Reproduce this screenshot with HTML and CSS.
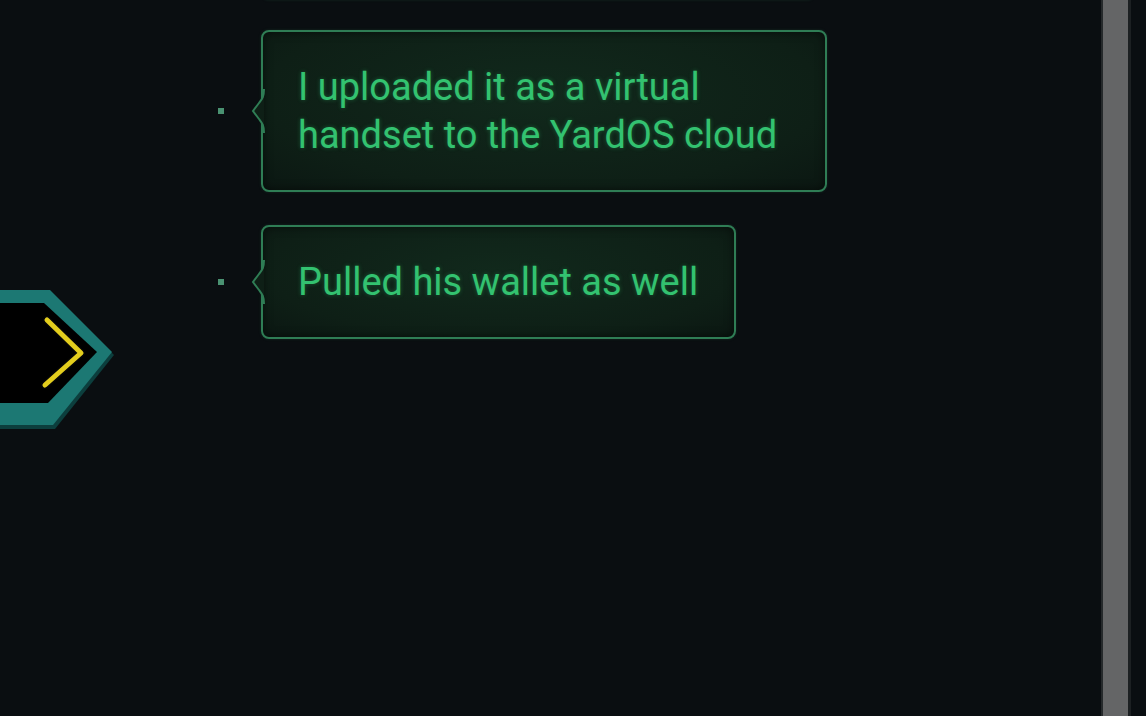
FILE: index.html
```html
<!DOCTYPE html>
<html lang="en">
<head>
<meta charset="UTF-8">
<meta name="viewport" content="width=device-width, initial-scale=1.0">
<title>Chat</title>
<link rel="stylesheet" href="styles.css">
</head>
<body>
    <div class="screen">
        <div class="side">
            <!-- back/next button on the left edge -->
            <button class="nav_btn" type="button" aria-label="Next">
                <svg width="116" height="142" viewBox="0 0 116 142">
                    <polygon points="0,5 52,5 114,67 55,141 0,141" fill="#0c3e3d"/>
                    <polygon points="0,2 50,2 112,64 53,137 0,137" fill="#1c7873"/>
                    <polygon points="0,15 44,15 97,64 48,115 0,115" fill="#000"/>
                    <polyline points="47,32 81,65 45,97" fill="none" stroke="#050505" stroke-width="8" stroke-linecap="round" stroke-linejoin="round"/>
                    <polyline points="47,32 81,65 45,97" fill="none" stroke="#e3cd1d" stroke-width="5" stroke-linecap="round" stroke-linejoin="round"/>
                </svg>
            </button>
        </div>
        <div class="chat">
            <div class="msg prev">
                <span class="dot"></span>
                <div class="bubble"></div>
            </div>
            <div class="msg">
                <span class="dot"></span>
                <div class="bubble">
                    <svg class="tail" width="14" height="44" viewBox="0 0 14 44"><path d="M13 0 C13 8 11 10 8 14 L2 22 L8 30 C11 34 13 36 13 44" fill="#0e1f16" stroke="#2f7d55" stroke-width="2"/></svg>
                    <p>I uploaded it as a virtual handset to the YardOS cloud</p>
                </div>
            </div>
            <div class="msg last">
                <span class="dot"></span>
                <div class="bubble">
                    <svg class="tail" width="14" height="44" viewBox="0 0 14 44"><path d="M13 0 C13 8 11 10 8 14 L2 22 L8 30 C11 34 13 36 13 44" fill="#0e1f16" stroke="#2f7d55" stroke-width="2"/></svg>
                    <p>Pulled his wallet as well</p>
                </div>
            </div>
        </div>
        <div class="scrollbar"></div>
    </div>
</body>
</html>
```

FILE: styles.css
```css
*{margin:0;padding:0;box-sizing:border-box}
body{background:#0a0e11;font-family:Roboto,"Noto Sans",sans-serif;overflow:hidden}
.screen{display:flex;height:716px;overflow:hidden}
.side{width:210px;flex-shrink:0;padding-top:288px}
.nav_btn{display:block;border:0;background:none;cursor:pointer}
.nav_btn svg{display:block}

.chat{flex:1;display:flex;flex-direction:column;align-items:flex-start;margin-top:-66px}
.msg{display:flex;align-items:center}
.msg + .msg{margin-top:30px}
.msg.last{margin-top:33px}
.dot{width:6px;height:6px;margin-left:8px;background:#4a9272;flex-shrink:0}
.bubble{position:relative;margin-left:37px;max-width:566px;padding:31px 36px 31px 35px;border:2px solid #2f7d55;border-radius:8px;background:radial-gradient(ellipse at 50% 40%,#11291c 0%,#0e1f16 70%,#0b1712 100%);box-shadow:inset 0 0 10px rgba(0,0,0,.55),0 0 3px rgba(47,125,85,.25)}
.bubble p{font-size:38px;line-height:48px;color:#33c270;text-shadow:0 0 4px rgba(45,200,110,.35)}
.msg.prev .bubble{width:554px;height:64px}
.tail{position:absolute;left:-12px;top:50%;margin-top:-22px;display:block}

.scrollbar{width:30px;flex-shrink:0;margin-right:15px;background:#646566;border-left:2px solid #25292b;border-right:3px solid #1c2022}
```
